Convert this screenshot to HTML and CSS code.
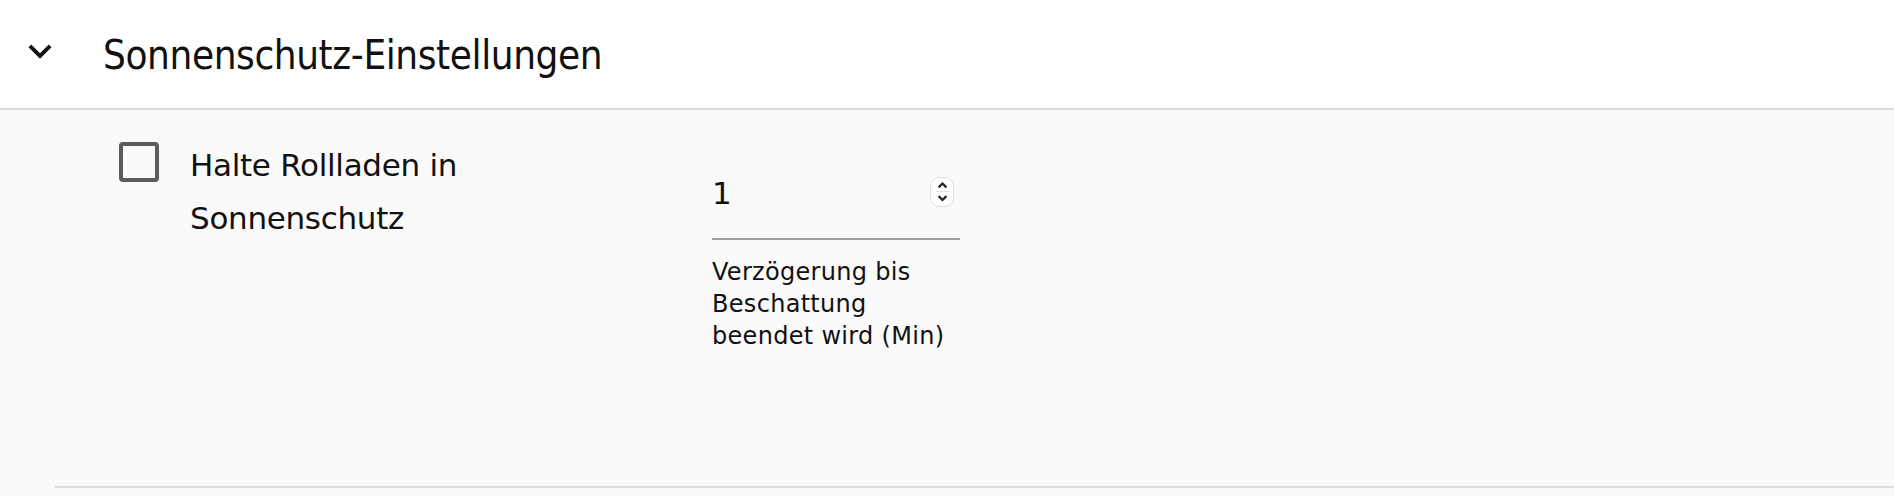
FILE: index.html
```html
<!DOCTYPE html>
<html lang="de">
<head>
    <meta charset="UTF-8">
    <meta name="viewport" content="width=device-width, initial-scale=1.0">
    <title>Sonnenschutz-Einstellungen</title>
    <link rel="stylesheet" href="styles.css">
</head>
<body>

    <div class="panel">
        <div class="panel-header">
            <svg class="expand-icon" viewBox="0 0 24 24" width="46" height="46">
                <path d="M16.59 8.59L12 13.17 7.41 8.59 6 10l6 6 6-6z"/>
            </svg>
            <span class="panel-title">Sonnenschutz-Einstellungen</span>
        </div>

        <div class="panel-body">
            <div class="option-row">
                <label class="check-option">
                    <span class="checkbox"></span>
                    <span class="check-label">Halte Rollladen in Sonnenschutz</span>
                </label>

                <div class="number-field">
                    <div class="number-input">
                        <span class="number-value">1</span>
                        <span class="spinner">
                            <svg viewBox="0 0 10 8" width="13" height="14"><path d="M2 6 L5 3 L8 6"/></svg>
                            <svg viewBox="0 0 10 8" width="13" height="14"><path d="M2 2 L5 5 L8 2"/></svg>
                        </span>
                    </div>
                    <div class="number-hint">Verzögerung bis Beschattung beendet wird (Min)</div>
                </div>
            </div>
        </div>

        <div class="panel-divider"></div>
    </div>

</body>
</html>
```

FILE: styles.css
```css
body {
    font-family: 'DejaVu Sans', sans-serif;
    background-color: #fafafa;
    color: #111;
    margin: 0;
    padding: 0;
}

.panel-header {
    height: 108px;
    background-color: #fff;
    border-bottom: 2px solid #dcdcdc;
    display: flex;
    align-items: center;
    padding-left: 17px;
    gap: 40px;
}

.expand-icon {
    fill: #111;
    margin-top: -6px;
}

.panel-title {
    font-size: 40px;
    font-stretch: condensed;
    letter-spacing: -0.4px;
    color: #111;
    margin-top: 2px;
}

.panel-body {
    height: 376px;
    padding: 32px 0 0 119px;
    box-sizing: border-box;
}

.option-row {
    display: flex;
    align-items: flex-start;
}

.check-option {
    display: flex;
    align-items: flex-start;
    gap: 31px;
    width: 593px;
    cursor: pointer;
}

.checkbox {
    width: 40px;
    height: 40px;
    box-sizing: border-box;
    border: 4px solid #5c5c5c;
    border-radius: 4px;
    flex-shrink: 0;
}

.check-label {
    font-size: 31px;
    line-height: 53px;
    margin-top: -3px;
    width: 300px;
    letter-spacing: -0.3px;
}

.number-field {
    width: 248px;
    margin-top: 3px;
}

.number-input {
    display: flex;
    align-items: center;
    justify-content: space-between;
    height: 95px;
    border-bottom: 2px solid #9e9e9e;
    box-sizing: border-box;
}

.number-value {
    font-size: 31px;
    margin-top: 2px;
}

.spinner {
    display: flex;
    flex-direction: column;
    align-items: center;
    justify-content: center;
    width: 24px;
    height: 30px;
    box-sizing: border-box;
    border: 1px solid #dedede;
    border-radius: 9px;
    margin-right: 6px;
    background-color: #fff;
}

.spinner svg {
    fill: none;
    stroke: #222;
    stroke-width: 1.7;
}

.spinner svg:first-child {
    border-bottom: 1px solid #dedede;
}

.number-hint {
    width: 240px;
    font-size: 24px;
    line-height: 32px;
    margin-top: 16px;
    letter-spacing: 0.3px;
}

.panel-divider {
    margin-left: 55px;
    border-top: 2px solid #dedede;
}
```
